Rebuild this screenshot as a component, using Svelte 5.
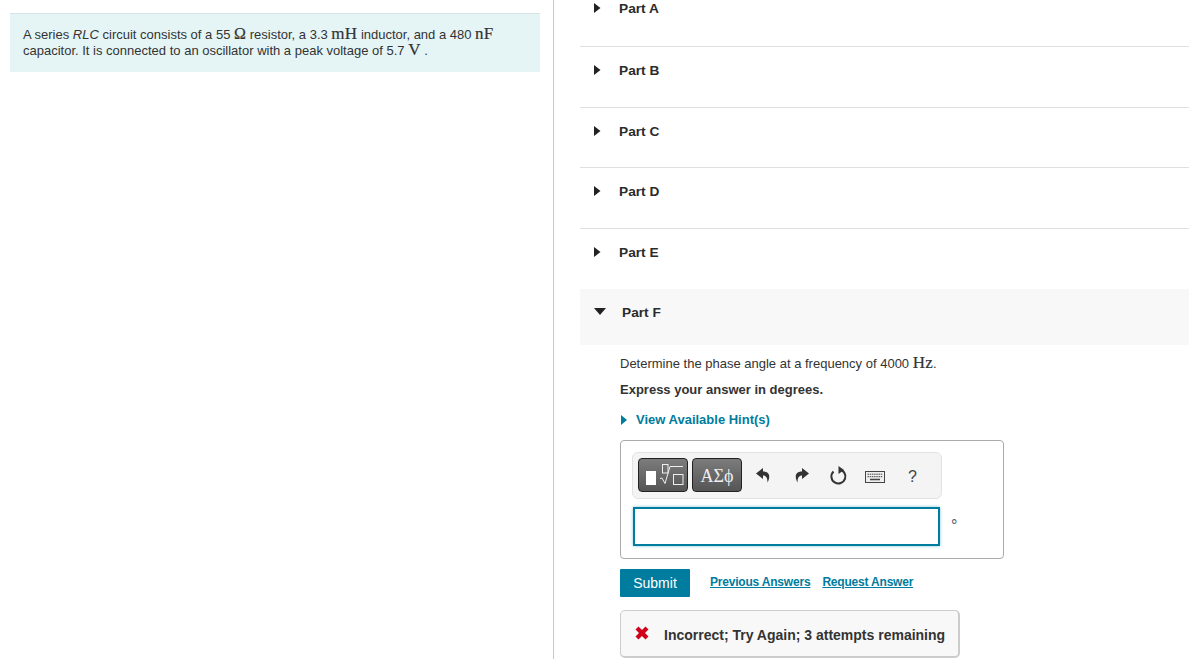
<script>
  const parts = ['Part A', 'Part B', 'Part C', 'Part D', 'Part E'];
</script>

<div class="page">
  <aside class="left">
    <div class="problem">
      <p>A series <i>RLC</i> circuit consists of a 55 <span class="m om">Ω</span> resistor, a 3.3 <span class="m">mH</span> inductor, and a 480 <span class="m">nF</span><br />capacitor. It is connected to an oscillator with a peak voltage of 5.7 <span class="m">V</span> .</p>
    </div>
  </aside>
  <main class="right">
    {#each parts as p}
      <div class="row">
        <svg class="tri" width="7" height="10" viewBox="0 0 7 10"><path d="M0 0 6.500 5 0 10Z" fill="#222" /></svg>
        <b>{p}</b>
      </div>
    {/each}
    <div class="open">
      <svg width="12" height="7" viewBox="0 0 12 7"><path d="M0 0H12L6 7Z" fill="#222" /></svg>
      <b>Part F</b>
    </div>
    <div class="body">
      <p class="q">Determine the phase angle at a frequency of 4000 <span class="m">Hz</span>.</p>
      <p class="ex">Express your answer in degrees.</p>
      <div class="hint">
        <svg width="6" height="10" viewBox="0 0 6 10"><path d="M0 0 6 5 0 10Z" fill="#007c9e" /></svg>
        <span>View Available Hint(s)</span>
      </div>
      <div class="answer">
        <div class="toolbar">
          <button class="tb" aria-label="Templates">
            <svg width="48" height="32" viewBox="0 0 48 32" fill="none" stroke="#eee">
              <rect x="7" y="12" width="10" height="14" fill="#fff" stroke="none" />
              <rect x="23.500" y="5.500" width="5.500" height="8.500" />
              <path d="M21 19.500 23 19 26 24.500 31 7.500H44" />
              <rect x="34.500" y="15.500" width="9.500" height="10" />
            </svg>
          </button>
          <button class="tb gr"><span>ΑΣϕ</span></button>
          <svg class="ic ml1" width="14" height="15" viewBox="0 0 14 15"><path d="M7 0 0 5.500 7 11V7.500C10 7.500 11.500 9.500 11.500 14.500 14.500 9 14 3.500 7 3.500Z" fill="#333" /></svg>
          <svg class="ic ml2" width="14" height="15" viewBox="0 0 14 15"><path d="M7 0 14 5.500 7 11V7.500C4 7.500 2.500 9.500 2.500 14.500-.5 9 0 3.500 7 3.500Z" fill="#333" /></svg>
          <svg class="ic ml3" width="18" height="20" viewBox="0 0 18 20"><path d="M3.500 5.500A7 7 0 1 0 9 3.500" fill="none" stroke="#333" stroke-width="2" /><path d="M8.500 0 14 4 8.500 8Z" fill="#333" /></svg>
          <svg class="ic ml4 kb" width="20" height="13" viewBox="0 0 20 13"><rect x=".5" y=".5" width="19" height="11" fill="#eee" stroke="#444" /><path d="M2.500 3.200H17.500M2.500 5.700H17.500" stroke="#444" stroke-dasharray="1.500 .7" /><path d="M5 8.500H15" stroke="#444" stroke-width="1.500" /></svg>
          <span class="help">?</span>
        </div>
        <div class="inputrow">
          <div class="input"></div>
          <span class="deg">°</span>
        </div>
      </div>
      <div class="actions">
        <span class="submit">Submit</span>
        <span class="link l1">Previous Answers</span>
        <span class="link">Request Answer</span>
      </div>
      <div class="fb">
        <svg width="14" height="14" viewBox="0 0 14 14"><path d="M1.500 3.500 3.500 1.500 7 5 10.500 1.500 12.500 3.500 9 7 12.500 10.500 10.500 12.500 7 9 3.500 12.500 1.500 10.500 5 7Z" fill="#d0021b" stroke="#d0021b" stroke-width="1.400" /></svg>
        <b>Incorrect; Try Again; 3 attempts remaining</b>
      </div>
    </div>
  </main>
</div>

<style>
  :global(body) { margin: 0; background: #fff; }
  .page {
    display: flex; height: 659px; overflow: hidden;
    font-family: "Liberation Sans", Arial, sans-serif; font-size: 13px; color: #333;
  }
  .left { width: 553px; box-sizing: content-box; border-right: 1px solid #c8c8c8; flex: none; padding-top: 13px; }
  .problem {
    margin-left: 10px; width: 530px; height: 59px; box-sizing: border-box;
    background: #e5f5f6; border-top: 1px solid #d5e3e6; padding: 13px 13px 0;
  }
  p { margin: 0; }
  .problem p { line-height: 16px; }
  .m { font-family: "Liberation Serif", serif; font-size: 17px; font-weight: 400; -webkit-text-stroke: .2px #333; letter-spacing: .2px; line-height: 0; }
  .om { font-size: 16px; }
  .right { flex: 1; padding-left: 26px; min-width: 0; }
  .row {
    height: 60.670px; box-sizing: border-box; border-bottom: 1px solid #e0e0e0;
    display: flex; align-items: flex-start; padding: 16px 0 0 14px;
  }
  .row:first-child { height: 47px; padding-top: 1px; }
  .row:nth-child(5) { height: 60px; border-bottom: 0; }
  .row b, .open b { font-size: 13.700px; line-height: 16px; color: #2b2b2b; }
  .row .tri { margin-top: 2px; margin-right: 18px; }
  .open {
    height: 56px; background: #f8f8f8; display: flex; align-items: flex-start;
    padding: 16px 0 0 14px; box-sizing: border-box;
  }
  .open svg { margin-top: 3px; margin-right: 16px; }
  .body { padding-left: 40px; }
  .q { margin-top: 9px; line-height: 20px; }
  .ex { margin-top: 6px; font-weight: 700; line-height: 20px; }
  .hint { margin-top: 10px; display: flex; align-items: center; gap: 9px; height: 20px; color: #007c9e; font-weight: 700; }
  .hint svg { margin-left: 1px; }
  .answer {
    margin-top: 10px; width: 384px; height: 119px; box-sizing: border-box;
    border: 1px solid #aaa; border-radius: 4px; padding: 11px 11px 0;
  }
  .toolbar {
    width: 310px; height: 47px; box-sizing: border-box; background: #f4f4f4;
    border: 1px solid #e2e2e2; border-radius: 6px; display: flex; align-items: center; padding-left: 5px;
  }
  .tb {
    width: 50px; height: 34px; padding: 0; margin: 0 4px 0 0; box-sizing: border-box;
    border: 1px solid #222; border-radius: 4px;
    background: linear-gradient(#7c7c7c, #555);
    display: flex; align-items: center; justify-content: center;
    color: #eee; font-family: "Liberation Serif", serif; font-size: 18px;
  }
  .tb span { margin-top: 2px; }
  .ic { flex: none; margin-top: 1px; }
  .kb { margin-top: 5px; }
  .ml1 { margin-left: 10px; }
  .ml2 { margin-left: 25px; }
  .ml3 { margin-left: 21px; }
  .ml4 { margin-left: 17px; }
  .help { margin-left: 23px; font-size: 16px; color: #444; margin-top: 3px; }
  .inputrow { display: flex; align-items: center; margin-top: 8px; margin-left: 1px; }
  .input {
    width: 307px; height: 39px; box-sizing: border-box; background: #fff;
    border: 2px solid #007c9e; box-shadow: 0 0 3px #7fc4d6;
  }
  .deg { margin-left: 11px; font-size: 16px; color: #555; }
  .actions { margin-top: 10px; display: flex; align-items: flex-start; height: 28px; }
  .submit {
    width: 70px; height: 28px; background: #007c9e; color: #fff; border-radius: 1px; font-size: 14px;
    display: flex; align-items: center; justify-content: center;
  }
  .link { color: #007c9e; font-size: 12px; font-weight: 700; text-decoration: underline; letter-spacing: -.2px; margin-top: 6px; }
  .l1 { margin-left: 20px; margin-right: 12px; }
  .fb {
    margin-top: 13px; width: 340px; height: 48px; box-sizing: border-box; background: #f8f8f8;
    border: 1px solid #ccc; border-bottom-width: 2px; border-right-width: 2px; border-radius: 5px; display: flex; align-items: center; padding: 3px 0 0 14px; gap: 15px;
  }
  .fb svg { margin-top: -3px; }
  .fb b { color: #333; white-space: nowrap; font-size: 14px; }
</style>
